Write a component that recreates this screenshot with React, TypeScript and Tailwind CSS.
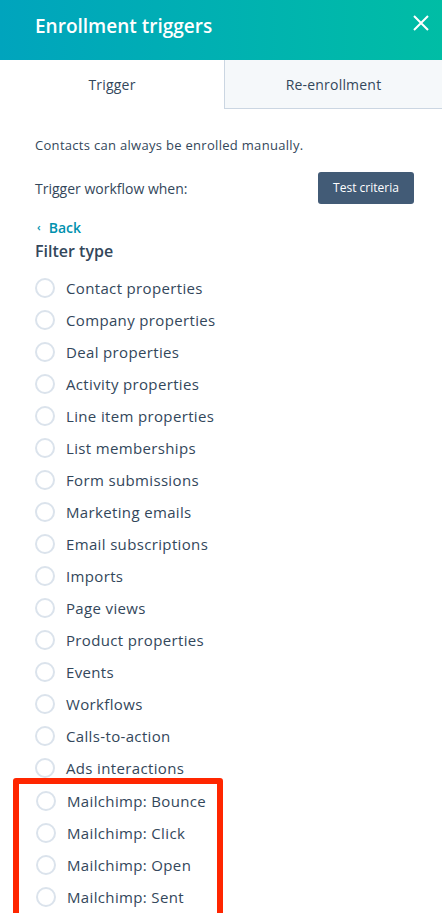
import React from 'react';

const filterTypes = [
  'Contact properties',
  'Company properties',
  'Deal properties',
  'Activity properties',
  'Line item properties',
  'List memberships',
  'Form submissions',
  'Marketing emails',
  'Email subscriptions',
  'Imports',
  'Page views',
  'Product properties',
  'Events',
  'Workflows',
  'Calls-to-action',
  'Ads interactions',
];

const mailchimp = ['Mailchimp: Bounce', 'Mailchimp: Click', 'Mailchimp: Open', 'Mailchimp: Sent'];

function RadioRow({ label }: { label: string }) {
  return (
    <label className="flex h-8 items-center gap-[11px]">
      <span className="h-5 w-5 shrink-0 rounded-full border-2 border-[#dbe3ec] bg-white" />
      <span className="text-[15px] tracking-[0.35px] text-[#33475b]">{label}</span>
    </label>
  );
}

export default function App() {
  return (
    <div className="h-[913px] w-[442px] overflow-hidden bg-white font-['Open_Sans',sans-serif] text-[#33475b]">
      <header className="flex h-[60px] justify-between bg-gradient-to-r from-[#00a4bd] to-[#00bda5] pl-[35px] pr-[13px]">
        <h1 className="mt-[12px] text-[19px] font-semibold leading-7 text-white">Enrollment triggers</h1>
        <svg className="mt-[15px] text-white" width="16" height="16" viewBox="0 0 16 16" fill="none" stroke="currentColor" strokeWidth="2">
          <path d="M1 1L15 15M15 1L1 15" />
        </svg>
      </header>

      <div className="flex h-[49px]">
        <div className="flex w-[224px] items-center justify-center text-[14px] tracking-[0.2px]">Trigger</div>
        <div className="flex flex-1 items-center justify-center border-b border-l border-[#cbd6e2] bg-[#f5f8fa] text-[14px] tracking-[0.2px]">
          Re-enrollment
        </div>
      </div>

      <div className="px-[35px] pt-[26px]">
        <p className="text-[13px] leading-5 tracking-[0.3px]">Contacts can always be enrolled manually.</p>

        <div className="mt-[17px] flex items-center justify-between">
          <span className="text-[14px] font-medium">Trigger workflow when:</span>
          <button className="-mr-[7px] h-8 w-24 rounded-[3px] bg-[#425b76] text-[12px] text-white">Test criteria</button>
        </div>

        <div className="mt-[13px] flex items-center gap-[8px] pl-[2px] text-[14px] font-semibold text-[#0091ae]">
          <span className="text-[11px]">‹</span>
          <span>Back</span>
        </div>
        <h2 className="mt-[1px] text-[16px] font-semibold">Filter type</h2>

        <div className="mt-[9px] flex flex-col">
          {filterTypes.map((t) => (
            <RadioRow key={t} label={t} />
          ))}
        </div>
      </div>

      <div className="ml-[13px] mt-[-6px] w-[210px] rounded-[3px] border-[6px] border-[#ff2600] pl-[17px] pt-[1px]">
        {mailchimp.map((t) => (
          <RadioRow key={t} label={t} />
        ))}
      </div>
    </div>
  );
}
